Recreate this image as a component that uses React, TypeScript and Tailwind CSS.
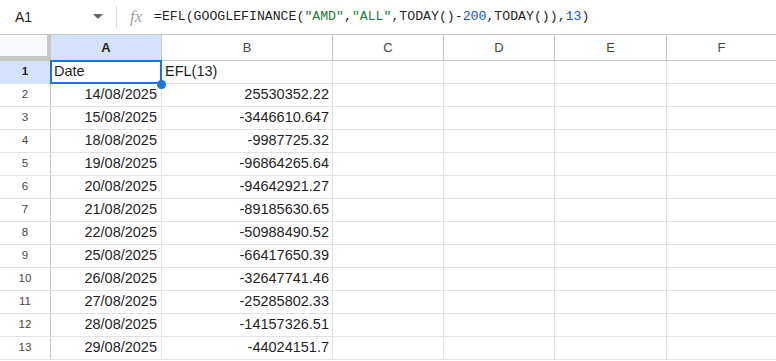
const rows: [string, string][] = [
    ["Date", "EFL(13)"],
    ["14/08/2025", "25530352.22"],
    ["15/08/2025", "-3446610.647"],
    ["18/08/2025", "-9987725.32"],
    ["19/08/2025", "-96864265.64"],
    ["20/08/2025", "-94642921.27"],
    ["21/08/2025", "-89185630.65"],
    ["22/08/2025", "-50988490.52"],
    ["25/08/2025", "-66417650.39"],
    ["26/08/2025", "-32647741.46"],
    ["27/08/2025", "-25285802.33"],
    ["28/08/2025", "-14157326.51"],
    ["29/08/2025", "-44024151.7"],
]

const cols = [
    { label: "A", w: "w-[111px]" },
    { label: "B", w: "w-[171px]" },
    { label: "C", w: "w-[111px]" },
    { label: "D", w: "w-[111px]" },
    { label: "E", w: "w-[112px]" },
]

function FormulaBar() {
    return (
        <div className="flex items-center h-[35px] border-b border-[#c4c7c5] bg-white">
            <div className="w-[90px] pl-[15px] text-[14px] text-[#1f1f1f]">A1</div>
            <svg width="10" height="6" viewBox="0 0 10 6" className="ml-[3px]">
                <path d="M0 0 L10 0 L5 5 Z" fill="#5f6368" />
            </svg>
            <div className="ml-[13px] w-px h-[22px] bg-[#dadce0]" />
            <span className="ml-[13px] w-[20px] text-[17px] italic text-[#9aa0a6]" style={{ fontFamily: '"Liberation Serif", serif' }}>
                fx
            </span>
            <div className="ml-[4px] text-[13.2px] text-[#1f1f1f] whitespace-pre" style={{ fontFamily: '"Liberation Mono", monospace' }}>
                =EFL(GOOGLEFINANCE(<span className="text-[#188038]">"AMD"</span>,<span className="text-[#188038]">"ALL"</span>,TODAY()-<span className="text-[#1155cc]">200</span>,TODAY()),<span className="text-[#1155cc]">13</span>)
            </div>
        </div>
    )
}

export default function App() {
    return (
        <div className="w-[776px] h-[361px] overflow-hidden bg-white text-[#1f1f1f]" style={{ fontFamily: '"Liberation Sans", Arial, sans-serif' }}>
            <FormulaBar />
            {/* column headers */}
            <div className="flex h-[26px] border-b border-[#c4c7c5]">
                <div className="w-[51px] shrink-0 h-[25px] bg-[#f8f9fa] border-r-4 border-b-4 border-[#c4c7c5] box-border" />
                {cols.map((c, i) => (
                    <div
                        key={c.label}
                        className={`${c.w} shrink-0 flex items-center justify-center text-[13px] border-r border-[#c4c7c5] ${i === 0 ? "bg-[#d3e3fd] font-bold text-[#1f1f1f]" : "text-[#444746]"}`}
                    >
                        {c.label}
                    </div>
                ))}
                <div className="flex-1 flex items-center justify-center text-[13px] text-[#444746]">F</div>
            </div>
            {rows.map((r, i) => (
                <div key={i} className="flex h-[23px] border-b border-[#e1e1e1]">
                    <div
                        className={`w-[51px] shrink-0 flex items-center justify-center text-[11.5px] border-r border-[#c4c7c5] ${i === 0 ? "bg-[#d3e3fd] font-bold text-[#1f1f1f]" : "text-[#444746]"}`}
                    >
                        {i + 1}
                    </div>
                    <div className={`relative w-[111px] shrink-0 flex items-center text-[14.5px] border-r border-[#e1e1e1] ${i === 0 ? "justify-start pl-[3px]" : "justify-end pr-[4px]"}`}>
                        {r[0]}
                        {i === 0 && (
                            <>
                                <div className="absolute z-10 -left-px -top-px -right-px -bottom-px border-2 border-[#1a73e8]" />
                                <div className="absolute z-20 -right-[5px] -bottom-[6px] w-[9px] h-[9px] rounded-full bg-[#1a73e8]" />
                            </>
                        )}
                    </div>
                    <div className={`w-[171px] shrink-0 flex items-center text-[14.5px] border-r border-[#e1e1e1] ${i === 0 ? "justify-start pl-[3px]" : "justify-end pr-[3px]"}`}>
                        {r[1]}
                    </div>
                    <div className="w-[111px] shrink-0 border-r border-[#e1e1e1]" />
                    <div className="w-[111px] shrink-0 border-r border-[#e1e1e1]" />
                    <div className="w-[112px] shrink-0 border-r border-[#e1e1e1]" />
                    <div className="flex-1" />
                </div>
            ))}
        </div>
    )
}
